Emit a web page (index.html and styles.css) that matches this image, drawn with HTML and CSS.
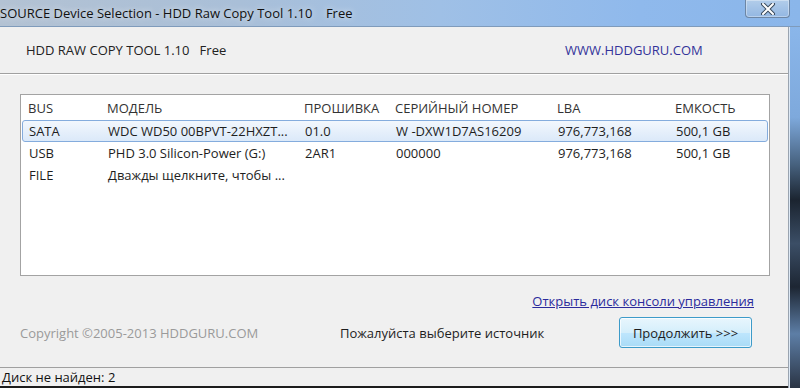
FILE: index.html
```html
<!DOCTYPE html>
<html lang="ru">
<head>
    <meta charset="UTF-8">
    <title>SOURCE Device Selection - HDD Raw Copy Tool 1.10</title>
    <link rel="stylesheet" href="styles.css">
</head>
<body>
<div class="window">
    <div class="titlebar">
        <span class="title">SOURCE Device Selection - HDD Raw Copy Tool 1.10&nbsp;&nbsp;&nbsp;&nbsp;Free</span>
        <div class="close-btn">
            <svg width="16" height="12" viewBox="0 0 16 12">
                <path d="M3 1 L13 11 M13 1 L3 11" stroke="#3a4a5c" stroke-width="4" stroke-linecap="round"/>
                <path d="M3 1 L13 11 M13 1 L3 11" stroke="#ffffff" stroke-width="2" stroke-linecap="round"/>
            </svg>
        </div>
    </div>
    <div class="main">
        <div class="client">
            <div class="banner">
                <span class="product">HDD RAW COPY TOOL 1.10&nbsp;&nbsp;&nbsp;Free</span>
                <span class="site">WWW.HDDGURU.COM</span>
            </div>
            <div class="content">
                <div class="devices">
                    <div class="row head">
                        <span>BUS</span>
                        <span>МОДЕЛЬ</span>
                        <span>ПРОШИВКА</span>
                        <span>СЕРИЙНЫЙ НОМЕР</span>
                        <span>LBA</span>
                        <span>ЕМКОСТЬ</span>
                    </div>
                    <div class="row selected">
                        <span>SATA</span>
                        <span>WDC WD50 00BPVT-22HXZT...</span>
                        <span>01.0</span>
                        <span>W -DXW1D7AS16209</span>
                        <span>976,773,168</span>
                        <span>500,1 GB</span>
                    </div>
                    <div class="row">
                        <span>USB</span>
                        <span>PHD 3.0 Silicon-Power (G:)</span>
                        <span>2AR1</span>
                        <span>000000</span>
                        <span>976,773,168</span>
                        <span>500,1 GB</span>
                    </div>
                    <div class="row">
                        <span>FILE</span>
                        <span>Дважды щелкните, чтобы ...</span>
                        <span></span>
                        <span></span>
                        <span></span>
                        <span></span>
                    </div>
                </div>
                <div class="link-row">
                    <a href="#" class="console-link">Открыть диск консоли управления</a>
                </div>
                <div class="footer-row">
                    <span class="copyright">Copyright ©2005-2013 HDDGURU.COM</span>
                    <span class="prompt">Пожалуйста выберите источник</span>
                    <button class="next-button">Продолжить &gt;&gt;&gt;</button>
                </div>
            </div>
            <div class="statusbar">Диск не найден: 2</div>
        </div>
        <div class="frame-right"></div>
    </div>
</div>
</body>
</html>
```

FILE: styles.css
```css
html, body {
    margin: 0;
    padding: 0;
}
body {
    font-family: "Open Sans", "Noto Sans", sans-serif;
    font-size: 13px;
    color: #1e1e1e;
    width: 800px;
    height: 388px;
    overflow: hidden;
}
.window {
    display: flex;
    flex-direction: column;
    width: 800px;
    height: 388px;
}
.titlebar {
    height: 27px;
    display: flex;
    align-items: flex-start;
    background: linear-gradient(90deg, #b3c2d3 0%, #a9bfd8 30%, #9fc0e6 55%, #8fb9ec 80%, #8ab6ea 100%);
    border-bottom: 1px solid #7f9bbb;
    box-sizing: border-box;
}
.title {
    font-size: 13px;
    padding-top: 4px;
    color: #111;
    text-shadow: 0 0 6px rgba(255, 255, 255, 0.8);
    white-space: pre;
}
.close-btn {
    margin-left: auto;
    margin-right: 10px;
    width: 45px;
    height: 18px;
    border: 1px solid #6d86a4;
    border-top: none;
    border-radius: 0 0 4px 4px;
    background: linear-gradient(#b2cdea, #93b7e2);
    box-shadow: inset 0 0 0 1px rgba(255, 255, 255, 0.35);
    display: flex;
    align-items: center;
    justify-content: center;
    box-sizing: border-box;
}
.main {
    flex: 1;
    display: flex;
}
.client {
    width: 790px;
    display: flex;
    flex-direction: column;
    background: #f0f0f0;
    border-right: 1px solid #9aa4b0;
    box-sizing: border-box;
}
.banner {
    height: 47px;
    display: flex;
    align-items: center;
    padding-left: 26px;
    border-bottom: 1px solid #a0a0a0;
    box-shadow: 0 1px 0 #ffffff;
    box-sizing: border-box;
}
.product {
    width: 539px;
    color: #222;
}
.site {
    color: #33339a;
}
.content {
    padding: 20px 0 0 20px;
}
.devices {
    width: 750px;
    height: 182px;
    background: #ffffff;
    border: 1px solid #a3a3a3;
    box-sizing: border-box;
}
.row {
    display: grid;
    grid-template-columns: 79px 197px 91px 162px 118px 1fr;
    height: 22px;
    align-items: center;
    margin: 0 1px;
    border: 1px solid transparent;
    box-sizing: border-box;
}
.row span {
    padding-left: 6px;
    white-space: nowrap;
}
.row.head {
    height: 25px;
    color: #333;
    border: none;
}
.row.selected {
    border: 1px solid #84acdd;
    border-radius: 3px;
    background: linear-gradient(#f2f7fd, #dbe9f9);
}
.link-row {
    display: flex;
    justify-content: flex-end;
    width: 734px;
    margin-top: 16px;
}
.console-link {
    color: #2b2b9c;
    text-decoration: underline;
}
.footer-row {
    display: flex;
    align-items: center;
    margin-top: 7px;
    height: 31px;
}
.copyright {
    width: 320px;
    color: #9a9a9a;
}
.prompt {
    flex: 1;
    color: #1e1e1e;
}
.next-button {
    width: 133px;
    height: 31px;
    margin-right: 36px;
    font-family: "Open Sans", "Noto Sans", sans-serif;
    font-size: 13px;
    color: #1e1e1e;
    border: 1px solid #3d9bc9;
    border-radius: 3px;
    background: linear-gradient(#e8f6fd 0%, #d4eefb 50%, #bee6fd 51%, #a9dbf6 100%);
    box-shadow: inset 0 0 0 1px rgba(255, 255, 255, 0.7);
}
.statusbar {
    margin-top: auto;
    height: 21px;
    padding-left: 2px;
    line-height: 19px;
    color: #111;
    border-top: 1px solid #a0a0a0;
    border-bottom: 2px solid #1c1c1c;
    box-sizing: border-box;
}
.frame-right {
    width: 10px;
    background: linear-gradient(#8ab6ea 0%, #7ea9dc 25%, #47627f 38%, #1b2430 48%, #3b4e66 60%, #1d2633 72%, #5d7ea6 85%, #2a3444 100%);
    border-left: 1px solid #dce8f5;
}
```
